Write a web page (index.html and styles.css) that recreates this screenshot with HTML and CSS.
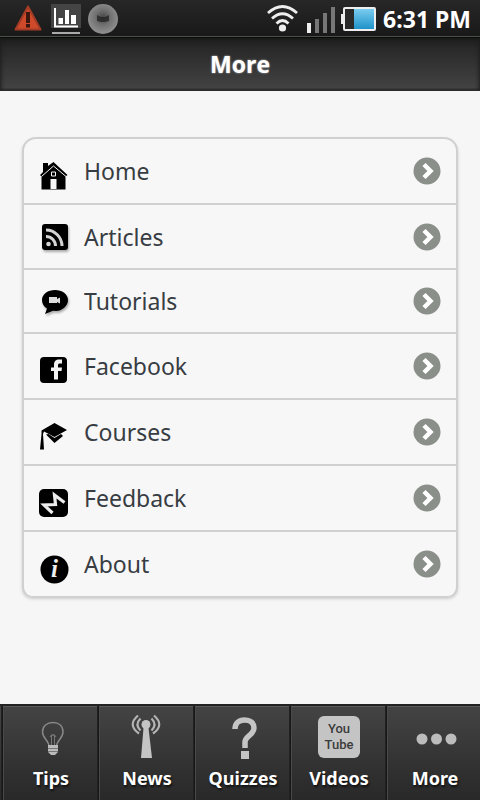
FILE: index.html
```html
<!DOCTYPE html>
<html lang="en">
<head>
<meta charset="utf-8">
<meta name="viewport" content="width=device-width, initial-scale=1">
<title>More</title>
<link rel="stylesheet" href="styles.css">
</head>
<body>
<svg class="defs" aria-hidden="true">
  <symbol id="chevron" viewBox="0 0 28 28">
    <circle cx="14" cy="14" r="13.5" fill="#8b8f8a"/>
    <path d="M11 7.500 17.500 14 11 20.500" fill="none" stroke="#fff" stroke-width="4.500"/>
  </symbol>
</svg>
<div class="status">
  <div class="status-group">
    <svg class="status-alert" viewBox="0 0 28 26" aria-hidden="true">
      <path d="M14 1.500 26.500 24.500H1.500z" fill="#cf4a2a" stroke="#a33c26" stroke-width="2" stroke-linejoin="round"/>
      <path d="M12 7h4v11h-4zM12 19h4v3.500h-4z" fill="#3a1710"/>
    </svg>
    <svg class="status-chart" viewBox="0 0 32 32" aria-hidden="true">
      <path d="M1 2h30v24H1z" fill="#444"/>
      <path d="M5 6v18.500h23" fill="none" stroke="#fff" stroke-width="2"/>
      <path d="M8.500 16H13v6H8.500zM15 8h4v14h-4zM21 13h5v9h-5z" fill="#fff"/>
      <path d="M2 31h28" stroke="#aaa" stroke-width="2"/>
    </svg>
    <svg class="status-ball" viewBox="0 0 32 32" aria-hidden="true">
      <defs><radialGradient id="ball" cy=".45"><stop offset="0" stop-color="#444"/><stop offset=".5" stop-color="#707070"/><stop offset="1" stop-color="#8c8c8c"/></radialGradient></defs>
      <circle cx="15" cy="17" r="15" fill="url(#ball)"/>
      <path d="M9 13l4 2h4l4-2v6l-4 1h-4l-4-1z" fill="#222" opacity=".75"/>
    </svg>
  </div>
  <div class="status-group">
    <svg class="status-wifi" viewBox="0 0 32 28" aria-hidden="true">
      <g fill="none" stroke="#eee" stroke-width="2.800"><path d="M3 9q14.500-13 29 0M7 14.500q10.500-9.500 21 0M11.500 19.500q6-6 12 0"/></g>
      <circle cx="17.500" cy="24" r="3.600" fill="#eee"/>
    </svg>
    <svg class="status-signal" viewBox="0 0 30 28" aria-hidden="true">
      <path d="M2 19h4v10H2z" fill="#eee"/>
      <path d="M10 15h4v14h-4zM18 9h4v20h-4zM26 3h4v26h-4z" fill="#777"/>
    </svg>
    <svg class="status-battery" viewBox="0 0 36 26" aria-hidden="true">
      <defs><linearGradient id="charge" x2="0" y2="1"><stop offset="0" stop-color="#7acdf0"/><stop offset="1" stop-color="#1f92c9"/></linearGradient></defs>
      <path d="M5 9H2v10h3" fill="#eee"/>
      <rect x="5" y="3" width="31" height="22" rx="1" fill="#2a2a2a" stroke="#eee" stroke-width="2"/>
      <path d="M15 4h20v20H15z" fill="url(#charge)"/>
    </svg>
    <span class="clock">6:31 PM</span>
  </div>
</div>
<header class="header"><h1>More</h1></header>
<main class="content">
  <ul class="menu">
    <li><a href="#home">
      <svg class="menu-icon" viewBox="0 0 32 40" aria-hidden="true">
        <path d="M5 12h5v3l5.500-4 14 13-2 1.500V38.500H3.500V25.500L2 24l3-3z"/>
        <path d="M3.500 25.500 15.500 15 28 25.500" fill="none" stroke="#f7f7f7"/>
        <path d="M12.500 28h6v10h-6z" fill="#f7f7f7"/><path d="M13.500 21h4v4h-4z" fill="none" stroke="#f7f7f7"/>
      </svg>
      <span>Home</span><svg class="arrow" aria-hidden="true"><use href="#chevron"/></svg></a></li>
    <li><a href="#articles">
      <svg class="menu-icon soft" viewBox="0 0 32 40" aria-hidden="true">
        <rect x="4" y="7" width="26" height="26" rx="3"/>
        <circle cx="10.500" cy="27" r="2.300" fill="#d5d5d5"/>
        <path d="M8 19.500a9.500 9.500 0 0 1 9.500 9.500M8 13a16 16 0 0 1 16 16" fill="none" stroke="#d5d5d5" stroke-width="3"/>
      </svg>
      <span>Articles</span><svg class="arrow" aria-hidden="true"><use href="#chevron"/></svg></a></li>
    <li><a href="#tutorials">
      <svg class="menu-icon soft" viewBox="0 0 32 40" aria-hidden="true">
        <path d="M17 9c7 0 13 4 13 10s-6 11-12 11l-3-.300-8 3.300 2-5.500c-3-2-5-4.500-5-8.500 0-6 6-10 13-10z"/>
        <path d="M11 16h8v2l3-1.500v6L19 21v1h-8z" fill="#ddd"/>
      </svg>
      <span>Tutorials</span><svg class="arrow" aria-hidden="true"><use href="#chevron"/></svg></a></li>
    <li><a href="#facebook">
      <svg class="menu-icon" viewBox="0 0 32 40" aria-hidden="true">
        <rect x="2" y="11" width="27" height="26" rx="4"/>
        <path d="M16 33.500V25h-3v-3.500h3V19c0-4 2-5.500 5-5.500h3v4h-2c-1.500 0-2 .500-2 1.800v2.200h4l-.500 3.500H20v8.500z" fill="#f4f4f4"/>
      </svg>
      <span>Facebook</span><svg class="arrow" aria-hidden="true"><use href="#chevron"/></svg></a></li>
    <li><a href="#courses">
      <svg class="menu-icon" viewBox="0 0 32 40" aria-hidden="true">
        <path d="M16.500 11 29 18l-12.500 7L6 19.500l-1 2.500 1 15.500H2L3.500 22l0-3.500z"/>
        <path d="M8 22.500l2.500-.500 6 4L23 22l2 2-8.500 7z"/>
      </svg>
      <span>Courses</span><svg class="arrow" aria-hidden="true"><use href="#chevron"/></svg></a></li>
    <li><a href="#feedback">
      <svg class="menu-icon" viewBox="0 0 32 40" aria-hidden="true">
        <rect x="1" y="11" width="29" height="28" rx="5"/>
        <path d="M14.500 35 6 27l11.500-.500L16.500 17l10 7.500" fill="none" stroke="#eee" stroke-width="3.200"/>
      </svg>
      <span>Feedback</span><svg class="arrow" aria-hidden="true"><use href="#chevron"/></svg></a></li>
    <li><a href="#about">
      <svg class="menu-icon" viewBox="0 0 32 40" aria-hidden="true">
        <circle cx="16.500" cy="25.500" r="14"/>
        <text class="info-glyph" x="16.500" y="33" text-anchor="middle">i</text>
      </svg>
      <span>About</span><svg class="arrow" aria-hidden="true"><use href="#chevron"/></svg></a></li>
  </ul>
</main>
<nav class="tabs">
  <a href="#tips"><svg viewBox="0 0 48 48" aria-hidden="true">
      <path d="M22 30.500c0-6-6.500-8-6.500-14.500C15.500 10 20 6.500 26 6.500s10 3.500 10 9.500c0 6.500-6.500 8.500-6.500 14.500" fill="none" stroke="#888" stroke-width="1.500"/>
      <path d="M24.500 30V19h3v11M23 21l1.500-2h3l1.500 2" fill="none" stroke="#777"/>
      <path d="M21 29h10v7l-3 3h-4l-3-3z" fill="#bbb"/><path d="M21 32.500h10M21 35.500h10" stroke="#777"/>
    </svg><span>Tips</span></a>
  <a href="#news"><svg viewBox="0 0 48 48" aria-hidden="true">
      <path d="M20.500 12h5l3.500 30H18z" fill="#c4c4c4"/><circle cx="23" cy="8.500" r="4.500" fill="#c4c4c4"/>
      <path d="M17.500 2.500q-6 6 0 12M28.500 2.500q6 6 0 12M15-.500q-11 9.500 1 18M31-.500q11 9.500-1 18" fill="none" stroke="#b4b4b4" stroke-width="2.200"/>
    </svg><span>News</span></a>
  <a href="#quizzes"><svg viewBox="0 0 48 48" aria-hidden="true">
      <path d="M16 13c0-6 4-9 9.500-9S35 6.500 35 12c0 7-9 8-9 14V32" fill="none" stroke="#c4c4c4" stroke-width="5.500"/>
      <path d="M22 35h8v8h-8z" fill="#c4c4c4"/>
    </svg><span>Quizzes</span></a>
  <a href="#videos"><i class="youtube">You<br>Tube</i><span>Videos</span></a>
  <a href="#more" aria-current="page"><svg viewBox="0 0 48 48" aria-hidden="true">
      <g fill="#bcbcbc"><circle cx="11" cy="23" r="5.500"/><circle cx="25.500" cy="23" r="5.500"/><circle cx="40" cy="23" r="5.500"/></g>
    </svg><span>More</span></a>
</nav>
</body>
</html>
```

FILE: styles.css
```css
* { box-sizing: border-box; }

body {
  margin: 0;
  min-height: 100vh;
  display: flex;
  flex-direction: column;
  overflow-x: hidden;
  background: #f6f6f6;
  font-family: "Noto Sans", "Open Sans", sans-serif;
}

svg { display: block; flex: none; overflow: visible; }
a { color: inherit; text-decoration: none; }
.defs { width: 0; height: 0; position: absolute; }

.status {
  height: 37px;
  padding: 0 9px 0 14px;
  display: flex;
  justify-content: space-between;
  background: linear-gradient(#272727, #191919);
  border-bottom: 1px solid #4b504b;
}
.status-group { display: flex; align-items: center; gap: 8px; }
.status-alert { width: 28px; height: 26px; }
.status-chart { width: 32px; height: 32px; }
.status-ball { width: 32px; height: 32px; margin-left: -2px; }
.status-wifi { width: 32px; height: 28px; }
.status-signal { width: 30px; height: 28px; }
.status-battery { width: 36px; height: 26px; margin-left: -4px; }
.clock {
  padding-top: 2px;
  color: #fff;
  font-size: 23px;
  line-height: 34px;
  font-weight: 700;
}

.header {
  height: 54px;
  background: linear-gradient(#1a1c1a, #292929 20%, #424242 95%, #303030);
  border-top: 1px solid #0a0a0a;
  border-bottom: 1px solid #2a2a2a;
  box-shadow: inset 4px 0 4px -3px #1c1c1c, inset -4px 0 4px -3px #1c1c1c;
}
h1 {
  margin: 0;
  color: #fff;
  font-size: 23px;
  line-height: 52px;
  font-weight: 700;
  font-family: "Open Sans", sans-serif;
  text-align: center;
  text-shadow: 0 0 2px #ccc;
}

.content { flex: 1; padding: 46px 22px; }
.menu {
  margin: 0;
  padding: 0;
  list-style: none;
  display: grid;
  grid-template-rows: 64px 65px 64px repeat(4, 66px);
  border: solid #d0d0d0;
  border-width: 2px 2px 1px;
  border-radius: 14px 14px 10px 10px;
  box-shadow: 0 2px 3px #ccc;
  background: #f7f7f7;
}
.menu li + li { border-top: 2px solid #d0d0d0; }
.menu a {
  height: 100%;
  padding: 0 15px 0 14px;
  display: flex;
  align-items: center;
  color: #373d43;
  font-size: 23px;
}
.menu span { flex: 1; padding-left: 14px; }
.menu-icon { width: 32px; height: 40px; }
.info-glyph {
  fill: #eee;
  font: italic 700 25px "Liberation Serif", serif;
}
.soft { filter: drop-shadow(1px 2px 1px #aaa); }
.arrow { width: 28px; height: 28px; }

.tabs {
  height: 96px;
  padding-left: 3px;
  display: grid;
  grid-template-columns: repeat(5, 20vw);
  overflow: hidden;
  background: linear-gradient(#444, #303030 70%, #292929);
  border-top: 2px solid #232323;
}
.tabs a {
  padding-top: 9px;
  display: flex;
  flex-direction: column;
  align-items: center;
  color: #fff;
  font-size: 18px;
  line-height: 24px;
  font-weight: 700;
  text-shadow: 1px 2px 2px #111;
  border-top: 1px solid #5a5a5a;
  box-shadow: -1px 0 #171717, -2px 0 #222, inset 1px 0 #4a4a4a;
}
.tabs svg { width: 48px; height: 48px; }
.tabs span { margin-top: 2px; }
.youtube {
  width: 42px;
  height: 42px;
  margin: 0 0 6px;
  padding-top: 5px;
  border-radius: 6px;
  background: #c4c4c4;
  color: #3c3c3c;
  font-family: Roboto, sans-serif;
  font-size: 13px;
  line-height: 16px;
  font-style: normal;
  font-weight: 500;
  text-align: center;
  text-shadow: none;
}
```
